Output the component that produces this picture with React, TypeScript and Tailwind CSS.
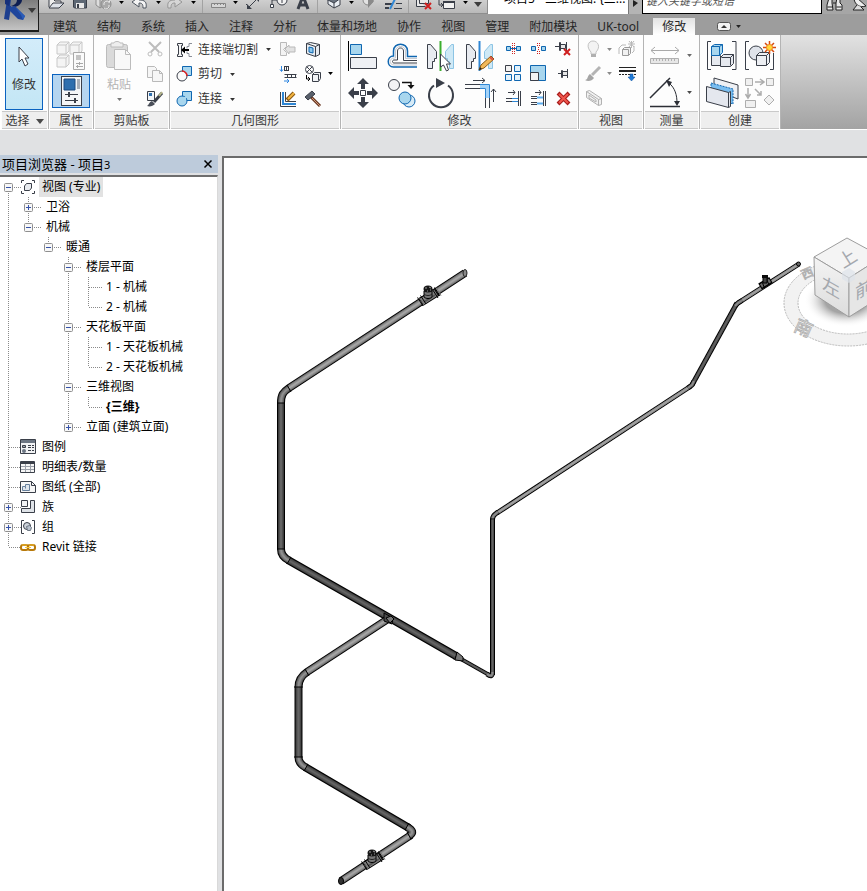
import React, { useState } from "react"
import clsx from "clsx"

type IconProps = { w?: number; h?: number; children: React.ReactNode; className?: string }

const INK = "#3a3f49"
const BLUE = "#0f66b0"
const SKY = "#a8d6ee"
const OFF = "#b9b9b9"

function Icon({ w = 20, h = 20, children, className }: IconProps) {
  return (
    <svg
      width={w}
      height={h}
      viewBox={`0 0 ${w} ${h}`}
      fill="none"
      aria-hidden="true"
      className={clsx("shrink-0 overflow-visible", className)}
    >
      {children}
    </svg>
  )
}

function Caret({ className = "text-[#4a4a4a]", big = false }: { className?: string; big?: boolean }) {
  return (
    <svg
      width={big ? 8 : 5}
      height={big ? 5 : 3}
      viewBox="0 0 8 5"
      aria-hidden="true"
      className={clsx("shrink-0", className)}
    >
      <path d="M0 0h8L4 5z" fill="currentColor" />
    </svg>
  )
}

function Tool({ label, children, className }: { label: string; children: React.ReactNode; className?: string }) {
  return (
    <button type="button" aria-label={label} className={clsx("flex items-center justify-center", className)}>
      {children}
    </button>
  )
}

/* ---------- quick access toolbar ---------- */

function QuickAccess() {
  return (
    <div className="flex h-[14px] w-[449px] shrink-0 items-end overflow-hidden border-r border-b border-[#8e8e8e] bg-gradient-to-b from-[#cfcfcf] to-[#b9b9b9] pl-[5px]">
      <Tool label="打开" className="w-6">
        <Icon w={24} h={14}>
          <path d="M5 8V0h4l2 2h6v2" stroke={INK} fill="#eee" />
          <path d="M5 9l4-5h11l-5 5z" fill="#dfe3ea" stroke={INK} />
        </Icon>
      </Tool>
      <Tool label="保存" className="w-6">
        <Icon w={24} h={14}>
          <path d="M5.500 -4h13v13h-12l-1-1z" fill="#5d6774" stroke={INK} />
          <path d="M8 -3h8v4H8z" fill="#eef1f5" />
          <path d="M8 4h8v5H8z" fill="#e8e8e8" />
          <path d="M9 5h2v4H9z" fill={INK} />
        </Icon>
      </Tool>
      <Tool label="同步" className="w-6">
        <Icon w={24} h={14}>
          <path d="M4 -2v8l4 3V1zM8 1l3-3M8 9l3-2" stroke="#8d8d8d" fill="#ddd" />
          <circle cx="14" cy="5" r="5" fill="#a9a9a9" stroke="#8d8d8d" />
          <path d="M12 6a3 3 0 015-3M17 4l1-3M17 6a3 3 0 01-5 3" stroke="#e8e8e8" />
        </Icon>
      </Tool>
      <div className="flex h-[13px] w-[10px] items-center justify-center"><Caret className="mb-2" /></div>
      <Tool label="放弃" className="w-7">
        <Icon w={28} h={14}>
          <path d="M6 3l7-5v3c6 0 8 2 7 8h-3c0-4-1-5-4-5v4z" fill="#f4f4f4" stroke="#4f5660" />
        </Icon>
      </Tool>
      <div className="flex h-[13px] w-2 items-center justify-center"><Caret className="mb-2" /></div>
      <Tool label="重做" className="w-[26px]">
        <Icon w={26} h={14}>
          <path d="M20 3l-7-5v3C7 1 5 3 6 9h3c0-4 1-5 4-5v4z" fill="#d6d6d6" stroke="#969696" />
        </Icon>
      </Tool>
      <div className="flex h-[13px] w-[10px] items-center justify-center"><Caret className="mb-2" /></div>
      <div className="mx-1 h-[13px] w-px bg-[#a2a2a2]" />
      <Tool label="测量" className="w-[22px]">
        <Icon w={22} h={14}>
          <path d="M5 0.500h12M4.500 4.500h14v4h-14zM7.500 4v2M10.500 4v2M13.500 4v2M16.500 4v2" stroke="#858585" fill="#d6d6d6" />
        </Icon>
      </Tool>
      <div className="flex h-[13px] w-3 items-center justify-center"><Caret className="mb-2" /></div>
      <Tool label="对齐尺寸标注" className="w-6">
        <Icon w={24} h={14}>
          <path d="M7 9l10-10M5 5l5 5M15 -3l4 4" stroke={INK} />
          <path d="M6 10V5l5 5zM18 -2v5l-5-5z" fill={INK} />
        </Icon>
      </Tool>
      <Tool label="按类别标记" className="w-7">
        <Icon w={28} h={14}>
          <path d="M7 7V1h5" stroke={INK} />
          <path d="M5.500 5.500h3v3h-3z" fill="#fff" stroke={INK} />
          <circle cx="17" cy="1" r="5" fill="#f2f2f2" stroke={INK} />
          <path d="M16 -1h1v5" stroke={INK} />
        </Icon>
      </Tool>
      <Tool label="文字" className="w-5">
        <Icon w={20} h={14}>
          <path d="M5 10l5-13 5 13M7 6h6" stroke={INK} strokeWidth="3" />
        </Icon>
      </Tool>
      <div className="mx-1 h-[13px] w-px bg-[#a2a2a2]" />
      <Tool label="默认三维视图" className="w-6">
        <Icon w={24} h={14}>
          <path d="M6 -1v6l6 4 6-3v-7" fill="#e9edf2" stroke={INK} />
          <path d="M4 0l8 4 7-5-4-3z" fill="#6a737f" stroke={INK} />
          <path d="M12 4v5" stroke={INK} />
        </Icon>
      </Tool>
      <div className="flex h-[13px] w-[10px] items-center justify-center"><Caret className="mb-2" /></div>
      <Tool label="剖面" className="w-[26px]">
        <Icon w={26} h={14}>
          <circle cx="12" cy="1" r="5" fill="#e2e2e2" stroke="#8a8a8a" />
          <path d="M12 -4v13l6-7z" fill="#8a8a8a" />
        </Icon>
      </Tool>
      <Tool label="细线" className="w-[22px]">
        <Icon w={22} h={14}>
          <path d="M3 5h7M3 9h4" stroke={INK} strokeWidth="2" />
          <path d="M14 4.500h6M12 9.500h8" stroke={INK} />
          <path d="M8 10l6-12" stroke="#2e86d4" strokeWidth="2" />
        </Icon>
      </Tool>
      <div className="mx-1 h-[13px] w-px bg-[#a2a2a2]" />
      <Tool label="关闭隐藏窗口" className="w-[22px]">
        <Icon w={22} h={14}>
          <path d="M3.500 0v7.500h9M6.500 -2v6.500h9v-6" stroke={INK} fill="#e9e9e9" />
          <path d="M12 4l6 6M18 4l-6 6" stroke="#cf1f1f" strokeWidth="2" />
        </Icon>
      </Tool>
      <Tool label="切换窗口" className="w-[26px]">
        <Icon w={26} h={14}>
          <path d="M8.500 2.500h11v7h-11z" fill="#f2f2f2" stroke={INK} />
          <path d="M8 3h12" stroke={INK} strokeWidth="2" />
          <path d="M4 0v6h3M6 4l2 2-2 2M6 -1h9v2" stroke={INK} />
        </Icon>
      </Tool>
      <div className="flex h-[13px] w-2 items-center justify-center"><Caret className="mb-2" /></div>
      <div className="flex h-[13px] flex-1 items-center justify-center"><Caret big className="mb-1 text-[#3d3d3d]" /></div>
    </div>
  )
}

function AppButton() {
  return (
    <button
      type="button"
      aria-label="应用程序菜单"
      className="flex h-8 w-[39px] shrink-0 border-r border-b-2 border-[#1c1c1c] bg-gradient-to-b from-[#7c7c7c] to-[#c4c4c4]"
    >
      <Icon w={28} h={24}>
        <path d="M7 0h5L9 20l-5-1z" fill="#1d3f8f" />
        <path d="M5 0h5l-1 6-4-2z" fill="#16307a" />
        <path d="M11 0h6c0 3-2 5-7 6z" fill="#7b8088" />
        <path d="M17 0h5c0 3-3 6-7 7l-4-1c4-1 6-3 6-6z" fill="#0d1e52" />
        <path d="M10 7l5-1 10 10-2 4-5-1-8-8z" fill="#1f469c" />
        <path d="M15 7l10 9-2 4-2-5z" fill="#2a5cba" />
      </Icon>
      <Caret big className="mt-2 text-[#3a3a3a]" />
    </button>
  )
}

/* ---------- tabs ---------- */

const tabs = [
  "建筑", "结构", "系统", "插入", "注释", "分析", "体量和场地",
  "协作", "视图", "管理", "附加模块", "UK-tool", "修改",
]

function Tabs({ active, onSelect }: { active: string; onSelect: (t: string) => void }) {
  return (
    <nav className="flex h-[21px] items-end pl-1">
      {tabs.map((tab) => (
        <button
          key={tab}
          type="button"
          onClick={() => onSelect(tab)}
          className={clsx(
            "h-[17px] whitespace-nowrap pt-px text-xs leading-4 text-[#262626]",
            tab === active ? "ml-1 bg-gradient-to-b from-[#e2e2e2] to-white px-[9px]" : "px-[10px]",
          )}
        >
          {tab}
        </button>
      ))}
      <button type="button" aria-label="最小化功能区" className="ml-[22px] flex h-[18px] items-center gap-[5px]">
        <Icon w={14} h={9}>
          <rect x="0.500" y="0.500" width="13" height="8" rx="2" fill="#f3f3f3" stroke="#555" />
          <path d="M4 6l3-3 3 3z" fill="#333" />
        </Icon>
        <Caret className="text-[#222]" />
      </button>
    </nav>
  )
}

/* ---------- ribbon ---------- */

function Panel({
  title,
  width,
  menu,
  children,
}: {
  title: string
  width: string
  menu?: boolean
  children: React.ReactNode
}) {
  return (
    <section className={clsx("flex shrink-0 flex-col border-r border-[#b4b4b4] bg-[#fdfdfd]", width)}>
      <div className="flex h-[76px] pt-[2px]">{children}</div>
      <div className="mx-px flex h-[18px] items-center justify-center gap-[6px] border-t border-b border-[#c9c9c9] bg-[#eeeeee] pt-[2px] text-xs leading-4 text-[#3a3a3a]">
        {title}
        {menu && <Caret big />}
      </div>
    </section>
  )
}

function SelectPanel() {
  return (
    <Panel title="选择" width="w-12" menu>
      <button
        type="button"
        className="ml-1 mt-px flex h-[72px] w-[38px] flex-col items-center border border-[#0a62c0] bg-gradient-to-b from-[#d3ecfa] to-[#c3e6f5] pt-[7px] text-xs text-[#333]"
      >
        <Icon w={16} h={22} className="mb-[9px]">
          <path
            d="M3 1v15l3-3 3 7 3-2-3-6h4z"
            fill="#fff"
            stroke="#3a3f49"
            strokeLinejoin="round"
          />
        </Icon>
        修改
      </button>
    </Panel>
  )
}

function PropertiesPanel() {
  return (
    <Panel title="属性" width="w-[45px]">
      <div className="flex w-full flex-col items-center">
        <Tool label="类型属性" className="h-[37px]">
          <Icon w={30} h={30}>
            <path
              d="M1 4l3-3h9v9l-3 3H1zM1 4h9v9M10 4l3-3M14 4l3-3h9v9l-3 3h-9zM14 4h9v9M23 4l3-3M1 17l3-3h9v9l-3 3H1zM1 17h9v9M10 17l3-3"
              fill="#f4f4f4"
              stroke="#c8c8c8"
            />
            <path d="M17.500 11.500h11v17h-11z" fill="#fafafa" stroke="#a9a9a9" />
            <path d="M20 14h5v5h-5z" fill="#c4c4c4" />
            <path d="M20 22.500h7M20 25.500h7M23.500 21v3M21.500 24v3" stroke="#a9a9a9" />
          </Icon>
        </Tool>
        <button
          type="button"
          aria-label="属性"
          aria-pressed="true"
          className="flex h-[34px] w-[38px] items-center justify-center border border-[#0a62c0] bg-[#b5d5f0]"
        >
          <Icon w={21} h={30}>
            <rect x="0.500" y="0.500" width="20" height="29" fill="#f4f6f8" stroke={INK} />
            <path d="M3 3h11v11H3z" fill="#2f6fae" stroke="#1d4a80" />
            <path d="M16 3h3v10h-3z" fill="#a9afb8" />
            <path d="M4 18.500h13M4 24.500h13" stroke={INK} />
            <path d="M8 16v5M14 22v5" stroke={INK} strokeWidth="2" />
          </Icon>
        </button>
      </div>
    </Panel>
  )
}

function ClipboardPanel() {
  return (
    <Panel title="剪贴板" width="w-[76px]">
      <button type="button" disabled className="flex w-[50px] flex-col items-center pt-[4px] text-xs leading-4 text-[#b4b4b4]">
        <Icon w={26} h={30} className="mb-[6px]">
          <rect x="0.500" y="3.500" width="21" height="23" rx="2" fill="#dadada" stroke="#bcbcbc" />
          <path d="M5 2h3c0-2 6-2 6 0h3v4H5z" fill="#eee" stroke="#bcbcbc" />
          <path d="M8.500 8.500h11l5 5v15h-16z" fill="#f8f8f8" stroke="#bcbcbc" />
          <path d="M19.500 8.500v5h5" stroke="#bcbcbc" />
        </Icon>
        粘贴
        <Caret className="mt-[5px] text-[#777]" />
      </button>
      <div className="grid grid-rows-3 pl-px">
        <Tool label="剪切" className="w-5">
          <Icon w={16} h={16}>
            <path d="M2 1l10 10M14 1L4 11" stroke="#bdbdbd" strokeWidth="2" />
            <circle cx="3" cy="13" r="2" stroke="#bdbdbd" />
            <circle cx="13" cy="13" r="2" stroke="#bdbdbd" />
          </Icon>
        </Tool>
        <Tool label="复制" className="w-5">
          <Icon w={16} h={16}>
            <path d="M0.500 0.500h7l2 2v9h-9z" fill="#f6f6f6" stroke={OFF} />
            <path d="M5.500 4.500h7l3 3v8h-10z" fill="#f6f6f6" stroke={OFF} />
            <path d="M12.500 4.500v3h3" stroke={OFF} />
          </Icon>
        </Tool>
        <Tool label="匹配类型属性" className="w-5">
          <Icon w={16} h={16}>
            <path d="M0.500 0.500h7v9h-7z" fill="#f1f5f9" stroke={INK} />
            <path d="M2 2h3v3H2z" fill="#2f6fae" />
            <path d="M7 11l8-9" stroke={INK} strokeWidth="3" />
            <path d="M12 5l3-4" stroke="#b5b58a" strokeWidth="2" />
            <path d="M0 15c2-1 2-4 5-5l3 3c-2 2-5 3-8 2z" fill="#4a4f59" />
          </Icon>
        </Tool>
      </div>
    </Panel>
  )
}

function GeometryRow({ label, icon, children }: { label: string; icon: React.ReactNode; children: React.ReactNode }) {
  return (
    <div className="flex items-center">
      <button type="button" className="flex w-[104px] items-center pt-px text-xs text-[#333]">
        <span className="mr-[5px]">{icon}</span>
        {label}
        <Caret className="ml-2" />
      </button>
      {children}
    </div>
  )
}

function GeometryPanel() {
  return (
    <Panel title="几何图形" width="w-[171px]">
      <div className="grid grid-rows-3 pl-[6px]">
        <GeometryRow
          label="连接端切割"
          icon={
            <Icon w={17} h={16}>
              <path d="M1.500 1.500h5v2h-1v9h1v2h-5v-2h1v-9h-1z" fill="#f5f5f5" stroke={INK} />
              <path d="M16 1.500h-3v3h-2v2M16 14.500h-3v-3h-2v-2" stroke="#8b909a" />
              <path d="M7 8h6" stroke="#000" strokeWidth="2" />
              <path d="M9 4.500v7L5 8z" fill="#000" />
            </Icon>
          }
        >
          <Tool label="取消连接" className="w-4">
            <Icon w={16} h={16}>
              <path d="M0.500 1.500h6v4l-3 3 3 3v3h-6z" fill="#f3f3f3" stroke={OFF} />
              <path d="M5 8l4-4v2h6v5H9v2z" fill="#e2e2e2" stroke={OFF} />
            </Icon>
          </Tool>
          <Tool label="墙连接" className="ml-[9px] w-4">
            <Icon w={16} h={16}>
              <path d="M1.500 2.500l9 3v10l-9-3zM10.500 5.500l4-2v10l-4 2M1.500 2.500l4-1 9 2" fill="#e6eaef" stroke={INK} />
              <path d="M4 6l4 1v5l-4-1z" fill="#8cc8ee" stroke={BLUE} />
            </Icon>
          </Tool>
        </GeometryRow>
        <GeometryRow
          label="剪切"
          icon={
            <Icon w={17} h={16}>
              <path d="M6.500 0.500h9v9h-9z" fill={SKY} stroke={BLUE} />
              <circle cx="6" cy="10" r="5" fill="#fafafa" stroke={INK} />
              <path d="M6 5a5 5 0 015 5" stroke="#e02020" strokeWidth="1.500" />
            </Icon>
          }
        >
          <Tool label="拆分面" className="w-4">
            <Icon w={16} h={16}>
              <path d="M1.500 0v5M0 3.500l1.500 2 1.500-2" stroke="#2e86e0" />
              <path d="M4 0.500h5M4.500 0v5M6.500 1v3M8.500 0v5M4 4.500h5" stroke={INK} />
              <path d="M4.500 8.500h12M4.500 11.500h12M7.500 9v2M11.500 9v2M15.500 9v2" stroke={INK} />
              <path d="M4 15h5M7 13l2 2-2 2" stroke="#2e86e0" />
            </Icon>
          </Tool>
          <Tool label="填色" className="ml-[9px] w-4">
            <Icon w={16} h={16}>
              <circle cx="4.500" cy="3.500" r="4" stroke={INK} />
              <path d="M2 1l5 5M7 1L2 6" stroke={INK} />
              <path d="M7.500 8.500l2-2h6v6l-2 3h-6zM7.500 8.500h6v6" fill="#f1f3f6" stroke={INK} />
              <path d="M1.500 9v4H4M3 11l2 2-2 2" stroke="#000" />
            </Icon>
          </Tool>
          <Caret className="ml-[7px]" />
        </GeometryRow>
        <GeometryRow
          label="连接"
          icon={
            <Icon w={17} h={16}>
              <path d="M6.500 0.500h9v9h-9z" fill={SKY} stroke={BLUE} />
              <circle cx="6" cy="10" r="5" fill={SKY} stroke={BLUE} />
              <path d="M7 6h3v3H7z" fill={SKY} />
            </Icon>
          }
        >
          <Tool label="对齐主体" className="w-4">
            <Icon w={16} h={16}>
              <path d="M0.500 1v14.500H16M5.500 1v9.500H16" stroke={INK} />
              <path d="M3 1v12h13" stroke="#2e86d4" strokeWidth="2" />
              <path d="M7 9l7-7" stroke="#8a5a12" strokeWidth="4" />
              <path d="M8 8l6-6" stroke="#f2b440" strokeWidth="2" />
            </Icon>
          </Tool>
          <Tool label="拆除" className="ml-[9px] w-4">
            <Icon w={16} h={16}>
              <path d="M6 6l9 9" stroke="#6b3a24" strokeWidth="3" />
              <path d="M7 7l8 8" stroke="#d09a7c" />
              <path d="M0 6l7-6 3 3-7 6z" fill="#59606b" stroke={INK} />
            </Icon>
          </Tool>
        </GeometryRow>
      </div>
    </Panel>
  )
}

function ModifyPanel() {
  return (
    <Panel title="修改" width="w-[238px]">
      <div className="grid grid-cols-4 grid-rows-2 pl-[2px]">
        <Tool label="对齐" className="w-[39px]">
          <Icon w={30} h={32}>
            <path d="M0.500 1v30" stroke="#000" />
            <path d="M2.500 4.500h11v10h-11z" fill={SKY} stroke={BLUE} />
            <path d="M2.500 17.500h26v11h-26z" fill="#eef0f4" stroke={INK} />
          </Icon>
        </Tool>
        <Tool label="偏移" className="w-[39px]">
          <Icon w={30} h={32}>
            <path d="M30 16.500h-9.500V11c0-9-14-9-14 0v5c-7 0-7 11 0 11H30" stroke={BLUE} strokeWidth="1.500" />
            <path d="M30 18.500H18.500V11c0-6-10-6-10 0v7H7c-5 0-5 7 0 7h23" stroke="#c5c9d0" />
            <path d="M30 20.500H16.500V11c0-4-6-4-6 0v9H7c-2 0-2 3 0 3h23" stroke={INK} />
          </Icon>
        </Tool>
        <Tool label="镜像 - 拾取轴" className="w-[39px]">
          <Icon w={30} h={32}>
            <path d="M1.500 4.500h3l6 7v7h-2v3h-2v7h-5z" fill="#e8ebf0" stroke={INK} />
            <path d="M27.500 4.500h-2l-6 7v7h2v3h2v7h4z" fill="#cfe9f6" stroke="#8cc4e4" />
            <path d="M14.500 1v30" stroke="#3cae2e" strokeWidth="2" />
            <path d="M14.500 14v13l3-2 3 6 2-1-2-6h4z" fill="#fff" stroke={INK} />
          </Icon>
        </Tool>
        <Tool label="镜像 - 绘制轴" className="w-[39px]">
          <Icon w={30} h={32}>
            <path d="M1.500 4.500h3l6 7v7h-2v3h-2v7h-5z" fill="#e8ebf0" stroke={INK} />
            <path d="M27.500 4.500h-2l-6 7v7h2v3h2v7h4z" fill="#cfe9f6" stroke="#8cc4e4" />
            <path d="M14.500 1v30" stroke="#2e86d4" strokeWidth="2" />
            <path d="M14 30l2-5 10-9 3 3-10 9z" fill="#f2b95a" stroke="#8a5a12" />
            <path d="M14 30l1-3 2 2z" fill="#222" />
            <path d="M25 17l3 3" stroke="#d9534a" strokeWidth="2" />
          </Icon>
        </Tool>
        <Tool label="移动" className="w-[39px]">
          <Icon w={30} h={32}>
            <path
              d="M15 1l6 6h-4v5h-4V7H9zM15 31l6-6h-4v-5h-4v5H9zM0 16l6-6v4h5v4H6v4zM30 16l-6-6v4h-5v4h5v4z"
              fill={INK}
            />
            <path d="M12.500 13.500h5v5h-5z" fill="#fff" stroke={INK} />
          </Icon>
        </Tool>
        <Tool label="复制" className="w-[39px]">
          <Icon w={30} h={32}>
            <circle cx="7" cy="8" r="5.500" fill="#f2f2f4" stroke={INK} />
            <path d="M15 5.500h9v4" stroke="#111" strokeWidth="1.500" />
            <path d="M20.500 8h7L24 12z" fill="#111" />
            <circle cx="22" cy="24" r="6" fill="#d7ebf7" stroke={BLUE} />
            <circle cx="18" cy="21" r="6" fill={SKY} stroke={BLUE} />
          </Icon>
        </Tool>
        <Tool label="旋转" className="w-[39px]">
          <Icon w={30} h={32}>
            <path d="M8 8.500A12 12 0 1022 8.500" stroke={INK} strokeWidth="2" />
            <path d="M10 1l9 5-9 5z" fill={INK} />
          </Icon>
        </Tool>
        <Tool label="修剪/延伸为角" className="w-[39px]">
          <Icon w={30} h={32}>
            <path d="M0 7.500h15M0 11.500h15M20.500 21v10M24.500 21v10" stroke={INK} />
            <path d="M15 7.500h9.500V21M15 11.500h5.500V21" stroke="#2e86d4" />
            <path d="M15 9.500h7.500V21" stroke="#a5d3f8" strokeWidth="3" />
            <path d="M8 3.500h12M17 1l3 2.500L17 6M28.500 25V12M26 15l2.500-3 2.500 3" stroke={INK} />
          </Icon>
        </Tool>
      </div>
      <div className="ml-[2px] grid grid-cols-3 grid-rows-3 gap-x-px">
        <Tool label="拆分图元" className="w-6">
          <Icon w={17} h={16}>
            <path d="M1.500 5.500h4v4h-4zM11.500 5.500h4v4h-4zM5.500 7.500h6" fill={SKY} stroke={BLUE} />
            <path d="M7.500 2v12M9.500 2v12" stroke="#c22" strokeDasharray="1 1" />
          </Icon>
        </Tool>
        <Tool label="用间隙拆分" className="w-6">
          <Icon w={17} h={16}>
            <path d="M1.500 5.500h4v4h-4zM11.500 5.500h4v4h-4z" fill={SKY} stroke={BLUE} />
            <path d="M7.500 2v3M7.500 10v3M9.500 2v3M9.500 10v3M8.500 6v3" stroke="#c22" strokeDasharray="1 1" />
          </Icon>
        </Tool>
        <Tool label="解锁" className="w-6">
          <Icon w={17} h={16}>
            <path d="M0 5.500h4M4.500 1.500h1v8h-1zM5.500 3.500h5v4h-5zM11.500 1v9" fill="#e7e7e7" stroke={INK} />
            <path d="M9 8l6 6M15 8l-6 6" stroke="#cf1f1f" strokeWidth="2" />
          </Icon>
        </Tool>
        <Tool label="阵列" className="w-6">
          <Icon w={17} h={17}>
            <path d="M0.500 0.500h6v6h-6z" fill="#f3f3f3" stroke={INK} />
            <path d="M9.500 0.500h6v6h-6zM0.500 9.500h6v6h-6zM9.500 9.500h6v6h-6z" fill="#e3f2fb" stroke={BLUE} />
          </Icon>
        </Tool>
        <Tool label="缩放" className="w-6">
          <Icon w={17} h={17}>
            <path d="M0.500 0.500h15v15h-15z" fill={SKY} stroke={BLUE} />
            <path d="M0.500 7.500h8v8h-8z" fill="#f3f3f3" stroke={INK} />
          </Icon>
        </Tool>
        <Tool label="锁定" className="w-6">
          <Icon w={17} h={16}>
            <path d="M3 7.500h3M6.500 4.500h1v7h-1zM7.500 5.500h5v4h-5zM12.500 3v9" fill="#e7e7e7" stroke={INK} />
          </Icon>
        </Tool>
        <Tool label="修剪/延伸单个图元" className="w-6">
          <Icon w={17} h={17}>
            <path d="M3 2.500h7M8 0l2 2.500L8 5M1 8.500h6M1 11.500h6M13.500 1v15M15.500 1v15" stroke={INK} />
            <path d="M7 8.500h6M7 11.500h6" stroke="#2e86d4" />
          </Icon>
        </Tool>
        <Tool label="修剪/延伸多个图元" className="w-6">
          <Icon w={17} h={17}>
            <path d="M5 2.500h6M9 0l2 2.500L9 5M1 6.500h6M1 8.500h6M1 12.500h6M1 14.500h6M13.500 1v15M15.500 1v15" stroke={INK} />
            <path d="M7 7.500h6M7 13.500h6" stroke="#5cadf0" strokeWidth="2" />
          </Icon>
        </Tool>
        <Tool label="删除" className="w-6">
          <Icon w={15} h={15}>
            <path d="M2 2l11 11M13 2L2 13" stroke="#a81c1c" strokeWidth="4" />
            <path d="M3 3l9 9M12 3l-9 9" stroke="#f0564c" strokeWidth="2" />
          </Icon>
        </Tool>
      </div>
    </Panel>
  )
}

function ViewPanel() {
  return (
    <Panel title="视图" width="w-[65px]">
      <div className="grid grid-cols-[28px_30px] grid-rows-3 pl-[5px]">
        <div className="flex items-center gap-[5px]">
          <Tool label="在视图中隐藏">
            <Icon w={18} h={18}>
              <path d="M7 12C2 7 4 1 9 1s8 6 3 11v2H7z" fill="#f3f3f3" stroke="#c2c2c2" />
              <path d="M7 15.500h5" stroke="#b0b0b0" strokeWidth="3" />
            </Icon>
          </Tool>
          <Caret className="text-[#8a8a8a]" />
        </div>
        <Tool label="置换图元">
          <Icon w={18} h={17}>
            <path d="M4.500 8.500l2-2h6v6l-2 2h-6zM4.500 8.500h6v6" fill="#f1f1f1" stroke="#999" />
            <path d="M1 13V7l3-3h4M14 12l2-2V5M10 3h7M13.500 0v7M11 0l5 6M16 0l-5 6" stroke={OFF} />
          </Icon>
        </Tool>
        <div className="flex items-center gap-[5px]">
          <Tool label="替换视图中的图形">
            <Icon w={18} h={18}>
              <path d="M8 10l8-8" stroke="#b4b4b4" strokeWidth="3" />
              <path d="M1 15c3 0 2-4 5-6l4 4c-2 3-6 4-9 2z" fill="#a5a5a5" />
            </Icon>
          </Tool>
          <Caret className="text-[#8a8a8a]" />
        </div>
        <Tool label="线处理">
          <Icon w={17} h={16}>
            <path d="M0 1.500h17" stroke="#222" />
            <path d="M0 5h17" stroke="#222" strokeWidth="2" />
            <path d="M0 8.500h17" stroke="#222" strokeDasharray="2 1" />
            <path d="M11 8h3v3h2l-3.500 4L9 11h2z" fill="#1f7bd8" stroke="#0f4f9a" strokeWidth="0.500" />
          </Icon>
        </Tool>
        <Tool label="选择框" className="w-[18px]">
          <Icon w={17} h={17}>
            <path d="M1.500 1.500l3-1 12 8v6l-3 1-12-8zM1.500 1.500l12 8v6M13.500 9.500l3-1" fill="#f1f1f1" stroke="#b2b2b2" />
            <path d="M4 5l7 5v2L4 8z" stroke="#b2b2b2" />
          </Icon>
        </Tool>
      </div>
    </Panel>
  )
}

function MeasurePanel() {
  return (
    <Panel title="测量" width="w-14">
      <div className="grid grid-rows-2 pl-[5px]">
        <div className="flex items-center gap-[6px]">
          <Tool label="测量两个参照之间的距离">
            <Icon w={32} h={32}>
              <path d="M2 10.500h28M6 7l-4 3.500L6 14M26 7l4 3.500L26 14" stroke="#a9a9a9" />
              <path d="M1.500 18.500h28v5h-28zM4.500 19v2M7.500 19v2M10.500 19v2M13.500 19v2M16.500 19v2M19.500 19v2M22.500 19v2M25.500 19v2" fill="#e7e7e7" stroke="#b0b0b0" />
            </Icon>
          </Tool>
          <Caret className="text-[#6a6a6a]" />
        </div>
        <div className="flex items-center gap-[6px]">
          <Tool label="角度尺寸标注">
            <Icon w={32} h={32}>
              <path d="M1 29.500h30M1 21L21 1" stroke="#2c2f36" strokeWidth="1.500" />
              <path d="M20 6c6 5 8 12 8 20" stroke="#2c2f36" />
              <path d="M17 3l6 2-3 5zM25 24h6l-3 5z" fill="#2c2f36" />
            </Icon>
          </Tool>
          <Caret />
        </div>
      </div>
    </Panel>
  )
}

function CreatePanel() {
  return (
    <Panel title="创建" width="w-[81px]">
      <div className="grid grid-cols-[39px_38px] grid-rows-2 pl-[2px]">
        <Tool label="创建部件">
          <Icon w={32} h={32}>
            <path d="M5 1.500H1.500v28H5M26 1.500h4v28h-4" stroke={INK} />
            <path d="M5.500 15.500h9v10h-9zM14.500 17.500l3-3h10v9l-3 3h-10z" fill="#e6e9ef" stroke={INK} />
            <path d="M24.500 17.500h-9M24.500 17.500v8M24.500 17.500l3-3" stroke={INK} />
            <path d="M5.500 6.500l3-2h8v8l-3 3h-8zM5.500 6.500h8v9M13.500 6.500l3-2" fill={SKY} stroke={BLUE} />
          </Icon>
        </Tool>
        <Tool label="创建组">
          <Icon w={32} h={32}>
            <path d="M5 1.500H1.500v28H5M26 29.500h3.500V13" stroke={INK} />
            <circle cx="12" cy="13" r="7" fill="#dfe3ea" stroke={INK} />
            <path d="M12.500 15.500l3-3h10v10l-3 3h-10zM12.500 15.500h10v10M22.500 15.500l3-3" fill="#eceef2" stroke={INK} />
            <path d="M25.500 1v13M19 7.500h13M21 3l9 9M30 3l-9 9" stroke="#d84a10" strokeWidth="1.500" />
            <circle cx="25.500" cy="7.500" r="3" fill="#ffd83c" stroke="#f08a1c" />
          </Icon>
        </Tool>
        <Tool label="创建零件">
          <Icon w={32} h={32}>
            <path d="M8 1l24 7v14l-8-3L8 12z" fill="#eef0f4" stroke={INK} />
            <path d="M5 6l22 6v15L5 20z" fill="#79bdf0" stroke={BLUE} strokeDasharray="2 1" />
            <path d="M0.500 9.500l22 6v15l-22-6zM22.500 15.500l2-1v15l-2 1" fill="#e4e7ee" stroke={INK} />
          </Icon>
        </Tool>
        <Tool label="创建类似">
          <Icon w={30} h={32}>
            <path d="M0.500 1.500h7v7h-7zM21.500 1.500h7v7h-7zM0.500 23.500h10v7h-10zM24 18l5 5-5 5-5-5z" fill="#f0f0f0" stroke="#adadad" />
            <path d="M10 5h8M15 2l4 3-4 3M3 11v9M0.500 17L3 21l2.500-4M10 12l6 6M16 14v4h-4" stroke="#adadad" strokeWidth="1.500" />
          </Icon>
        </Tool>
      </div>
    </Panel>
  )
}

/* ---------- project browser ---------- */

// guides: one character per 20px column
//   | line   (space) blank   t branch   L last branch
//   - / + expander,  m / p expander on the last sibling,  f first root expander
type Node = { guides: string; label: string; icon?: string; bold?: boolean; selected?: boolean }

const nodes: Node[] = [
  { guides: "f", label: "视图 (专业)", icon: "views", selected: true },
  { guides: "|+", label: "卫浴" },
  { guides: "|m", label: "机械" },
  { guides: "| m", label: "暖通" },
  { guides: "|  -", label: "楼层平面" },
  { guides: "|  |t", label: "1 - 机械" },
  { guides: "|  |L", label: "2 - 机械" },
  { guides: "|  -", label: "天花板平面" },
  { guides: "|  |t", label: "1 - 天花板机械" },
  { guides: "|  |L", label: "2 - 天花板机械" },
  { guides: "|  -", label: "三维视图" },
  { guides: "|  |L", label: "{三维}", bold: true },
  { guides: "|  p", label: "立面 (建筑立面)" },
  { guides: "t", label: "图例", icon: "legend" },
  { guides: "t", label: "明细表/数量", icon: "schedule" },
  { guides: "t", label: "图纸 (全部)", icon: "sheet" },
  { guides: "+", label: "族", icon: "family" },
  { guides: "+", label: "组", icon: "group" },
  { guides: "L", label: "Revit 链接", icon: "link" },
]

function Guide({ kind }: { kind: string }) {
  const expander = "-+mpf".includes(kind)
  const plus = kind === "+" || kind === "p"
  const last = "mpL".includes(kind)
  const glyph = (
    <svg width="20" height="20" viewBox="0 0 20 20" fill="none" aria-hidden="true" className="block overflow-visible">
      {kind !== " " && (
        <path
          d={`M8.5 ${kind === "f" ? 10 : 0}V${last ? 10 : 20}`}
          stroke="#8a8a8a"
          strokeDasharray="1 1"
        />
      )}
      {kind !== " " && kind !== "|" && <path d={expander ? "M14 10.500h8" : "M9 10.500h13"} stroke="#8a8a8a" strokeDasharray="1 1" />}
      {expander && (
        <>
          <rect x="4.500" y="6.500" width="8" height="8" rx="1" fill="#f7f7f7" stroke="#8f8f8f" />
          <path d={plus ? "M6 10.500h5M8.500 8v5" : "M6 10.500h5"} stroke="#3552a8" />
        </>
      )}
    </svg>
  )
  return expander ? (
    <button type="button" aria-label={plus ? "展开" : "折叠"} className="shrink-0">{glyph}</button>
  ) : (
    <span className="shrink-0">{glyph}</span>
  )
}

const nodeIcons: Record<string, React.ReactNode> = {
  views: (
    <>
      <path d="M4 1.500H1.500V4M12 1.500h2.500V4M4 14.500H1.500V12M12 14.500h2.500V12" stroke={INK} />
      <path d="M4.500 7l2-2.500h5V9l-2 2.500h-5z" fill="#e8ebef" stroke={INK} />
    </>
  ),
  legend: (
    <>
      <path d="M0.500 0.500h15v14h-15z" fill="#f2f3f5" stroke={INK} />
      <path d="M1 2.500h14" stroke="#6c7683" strokeWidth="3" />
      <path d="M2.500 6.500h3v2h-3z" fill="#9aa2ad" stroke={INK} />
      <circle cx="4" cy="12" r="2" fill="#6c7683" />
      <path d="M8 6.500h6M8 8.500h6M8 11.500h6" stroke={INK} strokeDasharray="3 1" />
    </>
  ),
  schedule: (
    <>
      <path d="M0.500 2.500h14v11h-14z" fill="#f6f6f6" stroke={INK} />
      <path d="M1 4h14" stroke={INK} strokeWidth="2" />
      <path d="M1 7.500h13M1 10.500h13M5.500 5v8M10.500 5v8" stroke="#9a9fa8" />
    </>
  ),
  sheet: (
    <>
      <path d="M0.500 2.500h11l4 4v7h-15z" fill="#f6f6f6" stroke={INK} />
      <path d="M11.500 2.500v4h4" stroke={INK} />
      <path d="M2.500 7.500h3v-2h4v6h-7zM5.500 7.500v2" fill="#dfe5ec" stroke="#67809c" />
    </>
  ),
  family: (
    <>
      <path d="M1.500 1.500h6v6h-6z" fill="#f2f3f5" stroke={INK} />
      <path d="M10.500 1.500h4v12h-13v-4h9z" fill="#dfe3e8" stroke={INK} />
    </>
  ),
  group: (
    <>
      <path d="M4 1.500H1.500v13H4M12 1.500h2.500v13H12" stroke={INK} />
      <circle cx="7" cy="7" r="3.500" fill="#cdd3db" stroke={INK} />
      <path d="M6.500 7.500l3-1 2 2-1 3h-3z" fill="#b9c2ce" stroke="#6c7683" />
    </>
  ),
  link: (
    <>
      <rect x="1" y="6" width="7" height="5" rx="2" stroke="#b8790a" strokeWidth="2" />
      <rect x="8" y="6" width="7" height="5" rx="2" stroke="#b8790a" strokeWidth="2" />
      <path d="M2 6h5M9 6h5M5 8.500h6" stroke="#f5c43a" />
    </>
  ),
}

function ProjectBrowser() {
  return (
    <aside className="flex w-[218px] shrink-0 flex-col">
      <header className="flex h-[18px] items-center justify-between bg-[#bdcbdb] pl-[2px] pr-[4px] text-[13px] leading-[18px] text-black">
        <h2>项目浏览器 - 项目<small className="text-[11px]">3</small></h2>
        <button type="button" aria-label="关闭" className="p-[2px]">
          <Icon w={8} h={8}>
            <path d="M0.500 0.500l7 7M7.500 0.500l-7 7" stroke="#000" strokeWidth="1.500" />
          </Icon>
        </button>
      </header>
      <div className="mt-[2px] flex-1 border-t-2 border-r border-t-[#6e6e6e] border-r-[#d9d9d9] bg-white">
        <ul className="flex flex-col">
          {nodes.map((node, i) => (
            <li key={i} className="flex h-5 items-center text-xs text-black">
              {node.guides.split("").map((g, k) => (
                <Guide key={k} kind={g} />
              ))}
              {node.icon && (
                <Icon w={16} h={16}>{nodeIcons[node.icon]}</Icon>
              )}
              <span
                className={clsx(
                  "ml-[3px] h-5 whitespace-nowrap px-[3px] leading-5",
                  node.bold && "font-bold",
                  node.selected && "bg-[#e2e2e2]",
                )}
              >
                {node.label}
              </span>
            </li>
          ))}
        </ul>
      </div>
    </aside>
  )
}

/* ---------- 3D view ---------- */

// "lit" runs face the light, the others are in shade
const pipes = [
  { d: "M492.500 675V519", size: 5, lit: false },
  { d: "M497 513L691 386", size: 5, lit: true },
  { d: "M692 385L737 303", size: 5, lit: false },
  { d: "M738 303L799 264", size: 5, lit: true },
  { d: "M461 659L491 676", size: 4, lit: false },
  { d: "M289 388L465 273", size: 8, lit: true },
  { d: "M281 403V549", size: 8, lit: false },
  { d: "M288 560L388 617L456 656", size: 8, lit: false },
  { d: "M388 619L307 672", size: 8, lit: true },
  { d: "M298.500 687V757", size: 8, lit: false },
  { d: "M305 767L409 828", size: 8, lit: false },
  { d: "M411 835L341 881", size: 8, lit: true },
]

const elbows = [
  { d: "M281 403C281 395 283 392 289 388", size: 8 },
  { d: "M281 549C281 555 284 558 289 560.500", size: 8 },
  { d: "M298.500 687C298.500 680 301 676 307 672", size: 8 },
  { d: "M298.500 757C298.500 762 301 765 306 767.500", size: 8 },
  { d: "M407 827C413 830 414 833 409 836", size: 8 },
  { d: "M492.500 520C492.500 516 494 515 498 512", size: 5 },
  { d: "M487 674C491 677 492.500 676 492.500 672", size: 5 },
  { d: "M688 388L692 385L694 381", size: 5 },
  { d: "M735 306L738 303L742 300.500", size: 5 },
]

function Run({ d, size, edge, body, shine }: { d: string; size: number; edge: string; body: string; shine: string }) {
  return (
    <g strokeLinejoin="round">
      <path d={d} stroke="#000" strokeWidth={size} />
      <path d={d} stroke={edge} strokeWidth={size - 2} />
      <path d={d} stroke={body} strokeWidth={size * 0.55} />
      <path d={d} stroke={shine} strokeWidth={size * 0.25} />
    </g>
  )
}

function Valve({ x, y }: { x: number; y: number }) {
  return (
    <g transform={`translate(${x} ${y})`}>
      <path d="M-8 5L8 -5" stroke="#000" strokeWidth="9" />
      <path d="M-7 4.500L7 -4.500" stroke="#808080" strokeWidth="7" />
      <path d="M-5 5L6 -2" stroke="#555" strokeWidth="2" />
      <path d="M-11.500 0.500l5.500 8.500M5.500 -9.500l5.500 8.500" stroke="#000" />
      <path d="M-10 0l5 8M7 -9.500l5 8" stroke="#777" />
      <path d="M-8.500 -1.500l5.500 8.500M3.500 -7.500l5.500 8.500" stroke="#000" />
      <path d="M-5 -6v6c2 2 6 2 8 0v-6z" fill="#777" stroke="#000" />
      <path d="M-5 -3c2 2 6 2 8 0" stroke="#222" />
      <ellipse cx="-1" cy="-8" rx="4.500" ry="3.500" fill="#161616" />
      <path d="M-4 -9h2M0 -10l2 1M-2 -6h1M1 -7h1" stroke="#9a9a9a" />
    </g>
  )
}

function SmallValve({ x, y }: { x: number; y: number }) {
  return (
    <g transform={`translate(${x} ${y})`}>
      <path d="M-5 3.500L6 -3" stroke="#000" strokeWidth="7" />
      <path d="M-4 3L5 -2.500" stroke="#6a6a6a" strokeWidth="4" />
      <path d="M-2.500 0l2 5M2 -3l2 5" stroke="#000" />
      <path d="M-2 -6h4v6h-4z" fill="#444" stroke="#000" />
      <path d="M-3 -8h6v3h-6z" fill="#0a0a0a" />
    </g>
  )
}

function PipeModel() {
  return (
    <svg
      width="644"
      height="734"
      viewBox="223 157 644 734"
      fill="none"
      role="img"
      aria-label="三维"
      className="block max-w-none"
    >
      {pipes.map((p) => (
        <Run
          key={p.d}
          d={p.d}
          size={p.size}
          edge={p.lit ? "#6a6a6a" : "#363636"}
          body={p.lit ? "#8c8c8c" : "#505050"}
          shine={p.lit ? "#a4a4a4" : "#646464"}
        />
      ))}
      {elbows.map((p) => (
        <Run key={p.d} d={p.d} size={p.size} edge="#4e4e4e" body="#737373" shine="#8f8f8f" />
      ))}
      {/* joints */}
      <path
        d="M277 403h8M277 549h8M287 385l4 7M287 564l4-7M294 687h9M294 757h9M305 669l4 7M304 771l4-7M405 830l4-7M407 832l4 7M454 660l4-7M490 519h5"
        stroke="#000"
      />
      <path d="M457 652l6 5v4l-8-1z" fill="#777" stroke="#000" />
      <path d="M384 613l9 5-1 6-8-3z" fill="#4c4c4c" stroke="#000" />
      <path d="M386 618l5-2 3 3-4 4z" fill="#777" stroke="#000" />
      <ellipse cx="465" cy="273" rx="2" ry="3.500" fill="#8a8a8a" stroke="#222" />
      <ellipse cx="341" cy="881" rx="2.500" ry="3.500" fill="#333" stroke="#000" />
      <circle cx="798.500" cy="264" r="2" fill="#666" stroke="#000" />
      <Valve x={429} y={297} />
      <Valve x={373} y={861} />
      <SmallValve x={765} y={283} />
    </svg>
  )
}

function ViewCube() {
  return (
    <svg width="87" height="122" viewBox="780 230 87 122" fill="none" className="absolute right-0 top-[73px]">
      <defs>
        <radialGradient id="cube-shadow">
          <stop offset="0.5" stopColor="#a4a4a4" />
          <stop offset="1" stopColor="#ffffff" stopOpacity="0" />
        </radialGradient>
        <linearGradient id="cube-side" x1="0" y1="0" x2="0" y2="1">
          <stop offset="0" stopColor="#f4f4f4" />
          <stop offset="1" stopColor="#dcdcdc" />
        </linearGradient>
      </defs>
      <path
        fillRule="evenodd"
        d="M784 302a64 43 0 10128 0a64 43 0 10-128 0zM798 302a50 31 0 10100 0a50 31 0 10-100 0z"
        fill="#f2f2f2"
        stroke="#b9b9b9"
        strokeDasharray="2 1"
      />
      <ellipse cx="846" cy="299" rx="42" ry="27" fill="url(#cube-shadow)" />
      <path d="M814 256l33-19 35 19-33 21z" fill="#f4f4f4" stroke="#9d9d9d" />
      <path d="M814 256l35 21v39l-34-22z" fill="url(#cube-side)" stroke="#9d9d9d" />
      <path d="M849 277l33-21v39l-33 21z" fill="#e6e6e6" stroke="#9d9d9d" />
      <path d="M842 271l7-4 6 4v7l-6 4-7-4z" fill="#dde3ea" fillOpacity="0.7" />
      <g fill="#a4a8ae" fontSize="18" textAnchor="middle">
        <text transform="translate(851 263) rotate(-32)">上</text>
        <text transform="translate(831 293) skewY(30)">左</text>
        <text transform="translate(864 294) skewY(-30)">前</text>
      </g>
      <g fill="#e9e9e9" stroke="#b0b0b0" strokeWidth="0.800" fontSize="18" textAnchor="middle">
        <text transform="translate(801 333) rotate(24)">南</text>
        <text transform="translate(809 276) rotate(-24)" fontSize="12">西</text>
      </g>
    </svg>
  )
}

export default function App() {
  const [activeTab, setActiveTab] = useState("修改")

  return (
    <div className="flex min-h-screen flex-col overflow-hidden bg-[#e0e1e3] font-['Noto_Sans','Noto_Sans_CJK_SC',sans-serif]">
      <div className="flex bg-[#9d9d9d]">
        <AppButton />
        <div className="min-w-0 flex-1">
          <div className="flex h-[14px] items-start overflow-hidden">
            <QuickAccess />
            <h1 className="h-[14px] min-w-0 flex-1 bg-white">
              <span className="-mt-[9px] block whitespace-nowrap pl-4 text-xs leading-4 text-black">
                项目5 - 三维视图: {"{三..."}
              </span>
            </h1>
            <button
              type="button"
              aria-label="展开搜索"
              className="flex h-[14px] w-[14px] shrink-0 items-start justify-center border-l border-[#777] bg-[#b4b4b4]"
            >
              <Icon w={5} h={8}>
                <path d="M0 0v7l5-4z" fill="#222" />
              </Icon>
            </button>
            <input
              type="search"
              aria-label="搜索"
              placeholder="键入关键字或短语"
              className="-mt-2 h-[22px] w-[180px] shrink-0 border border-black bg-white pb-[5px] pl-[3px] text-[11px] italic leading-[14px] text-black placeholder:text-[#555]"
            />
            <div className="flex h-[14px] w-[45px] shrink-0 gap-2 bg-[#a6a6a6] pl-1">
              <Tool label="搜索">
                <Icon w={17} h={14}>
                  <path d="M3 -2h3v5l1 7H1V5zM11 -2h3v5l2 2v5h-6V3z" fill="#e9e9e9" stroke="#222" />
                  <path d="M7 3h3M1.500 7h5M10.500 7h5" stroke="#222" />
                </Icon>
              </Tool>
              <Tool label="通讯中心">
                <Icon w={17} h={14}>
                  <path d="M3 -1c1 6 6 9 12 7L5 -3z" fill="#eee" stroke="#222" />
                  <path d="M6 5l-4 5h11l-3-3" fill="#ddd" stroke="#222" />
                </Icon>
              </Tool>
            </div>
          </div>
          <Tabs active={activeTab} onSelect={setActiveTab} />
        </div>
      </div>

      <div className="flex border-b border-white bg-white pl-px">
        <SelectPanel />
        <PropertiesPanel />
        <ClipboardPanel />
        <GeometryPanel />
        <ModifyPanel />
        <ViewPanel />
        <MeasurePanel />
        <CreatePanel />
        <div className="flex-1 bg-gradient-to-b from-[#e2e2e2] to-[#a3a3a3]" />
      </div>

      <main className="mt-[25px] flex flex-1">
        <ProjectBrowser />
        <div className="relative ml-1 mt-px min-w-0 flex-1 overflow-hidden border-t-2 border-l-2 border-[#6b6b6b] bg-white">
          <div className="-ml-px -mt-px">
            <PipeModel />
          </div>
          <ViewCube />
        </div>
      </main>
    </div>
  )
}
